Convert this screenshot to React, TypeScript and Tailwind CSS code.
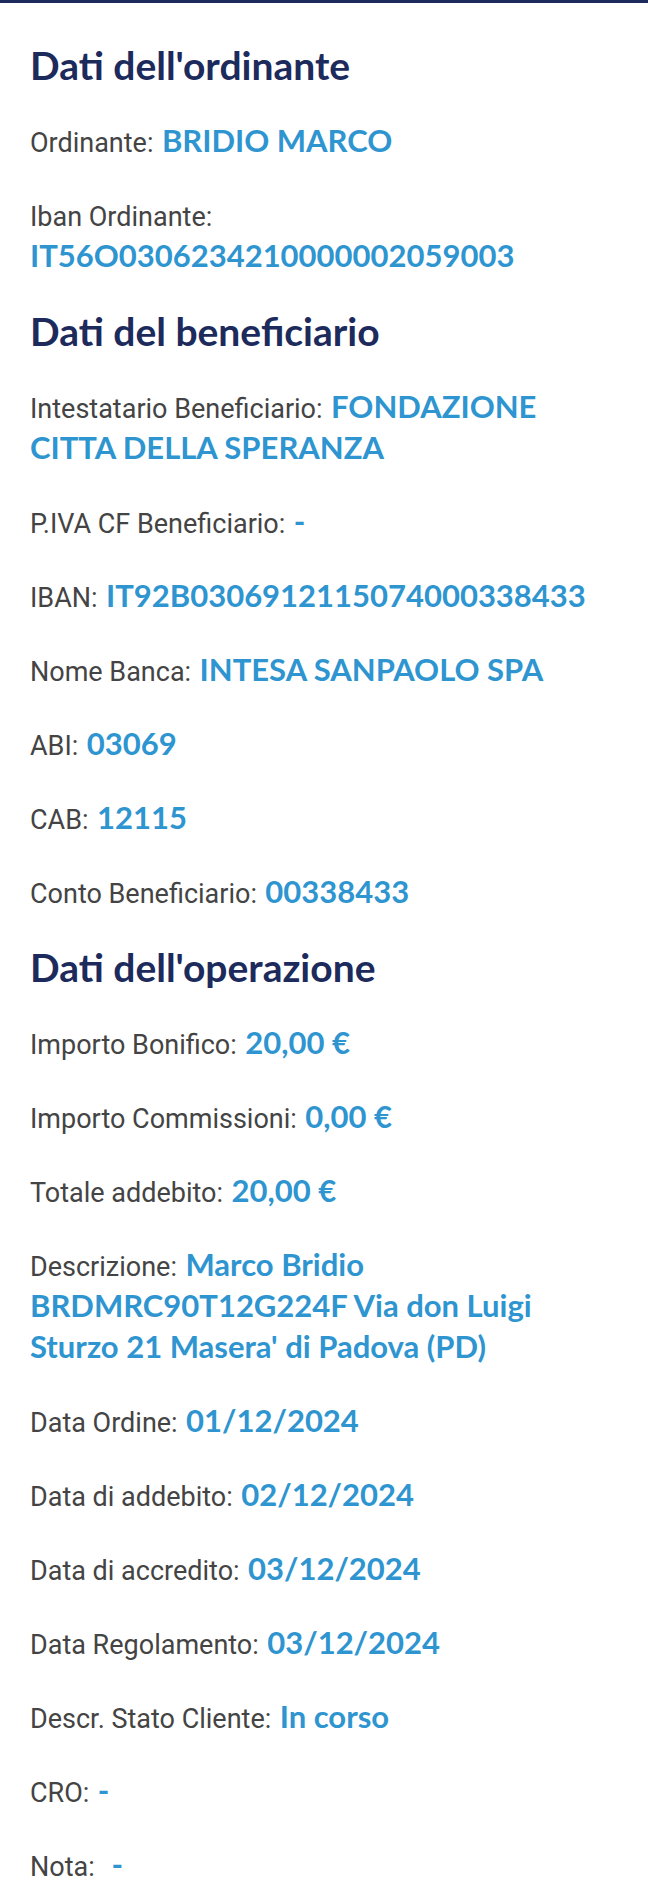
const label = "font-['Roboto',sans-serif] text-[27px] leading-none text-[#444444]";
const value = "font-['Lato',sans-serif] font-bold text-[31px] leading-none text-[#2e95d0]";

type Row = { label: string; value: string; sep?: string };

const sections: { title: string; rows: Row[] }[] = [
  {
    title: "Dati dell'ordinante",
    rows: [
      { label: 'Ordinante:', value: 'BRIDIO MARCO' },
      { label: 'Iban Ordinante:', value: 'IT56O0306234210000002059003' },
    ],
  },
  {
    title: 'Dati del beneficiario',
    rows: [
      { label: 'Intestatario Beneficiario:', value: 'FONDAZIONE CITTA DELLA SPERANZA' },
      { label: 'P.IVA CF Beneficiario:', value: '-' },
      { label: 'IBAN:', value: 'IT92B0306912115074000338433' },
      { label: 'Nome Banca:', value: 'INTESA SANPAOLO SPA' },
      { label: 'ABI:', value: '03069' },
      { label: 'CAB:', value: '12115' },
      { label: 'Conto Beneficiario:', value: '00338433' },
    ],
  },
  {
    title: "Dati dell'operazione",
    rows: [
      { label: 'Importo Bonifico:', value: '20,00 €' },
      { label: 'Importo Commissioni:', value: '0,00 €' },
      { label: 'Totale addebito:', value: '20,00 €' },
      {
        label: 'Descrizione:',
        value: "Marco Bridio BRDMRC90T12G224F Via don Luigi Sturzo 21 Masera' di Padova (PD)",
      },
      { label: 'Data Ordine:', value: '01/12/2024' },
      { label: 'Data di addebito:', value: '02/12/2024' },
      { label: 'Data di accredito:', value: '03/12/2024' },
      { label: 'Data Regolamento:', value: '03/12/2024' },
      { label: 'Descr. Stato Cliente:', value: 'In corso' },
      { label: 'CRO:', value: '-' },
      { label: 'Nota:', value: '-', sep: '\u00a0 ' },
    ],
  },
];

export default function App() {
  return (
    <div className="min-h-[1891px] w-[648px] border-t-[3px] border-[#1c2a5c] bg-white">
      <div className="flex flex-col gap-[33px] px-[30px] pt-[40px] pb-[20px]">
        {sections.map((section) => (
          <div key={section.title} className="contents">
            <h2 className="font-['Lato',sans-serif] text-[39px] leading-[44px] font-bold text-[#1c2a5c]">
              {section.title}
            </h2>
            {section.rows.map((row) => (
              <p
                key={row.label}
                className="font-['Roboto',sans-serif] text-[34px] leading-[41px]"
              >
                <span className={label}>{row.label}</span>
                {row.sep ?? ' '}
                <span className={value}>{row.value}</span>
              </p>
            ))}
          </div>
        ))}
      </div>
    </div>
  );
}
